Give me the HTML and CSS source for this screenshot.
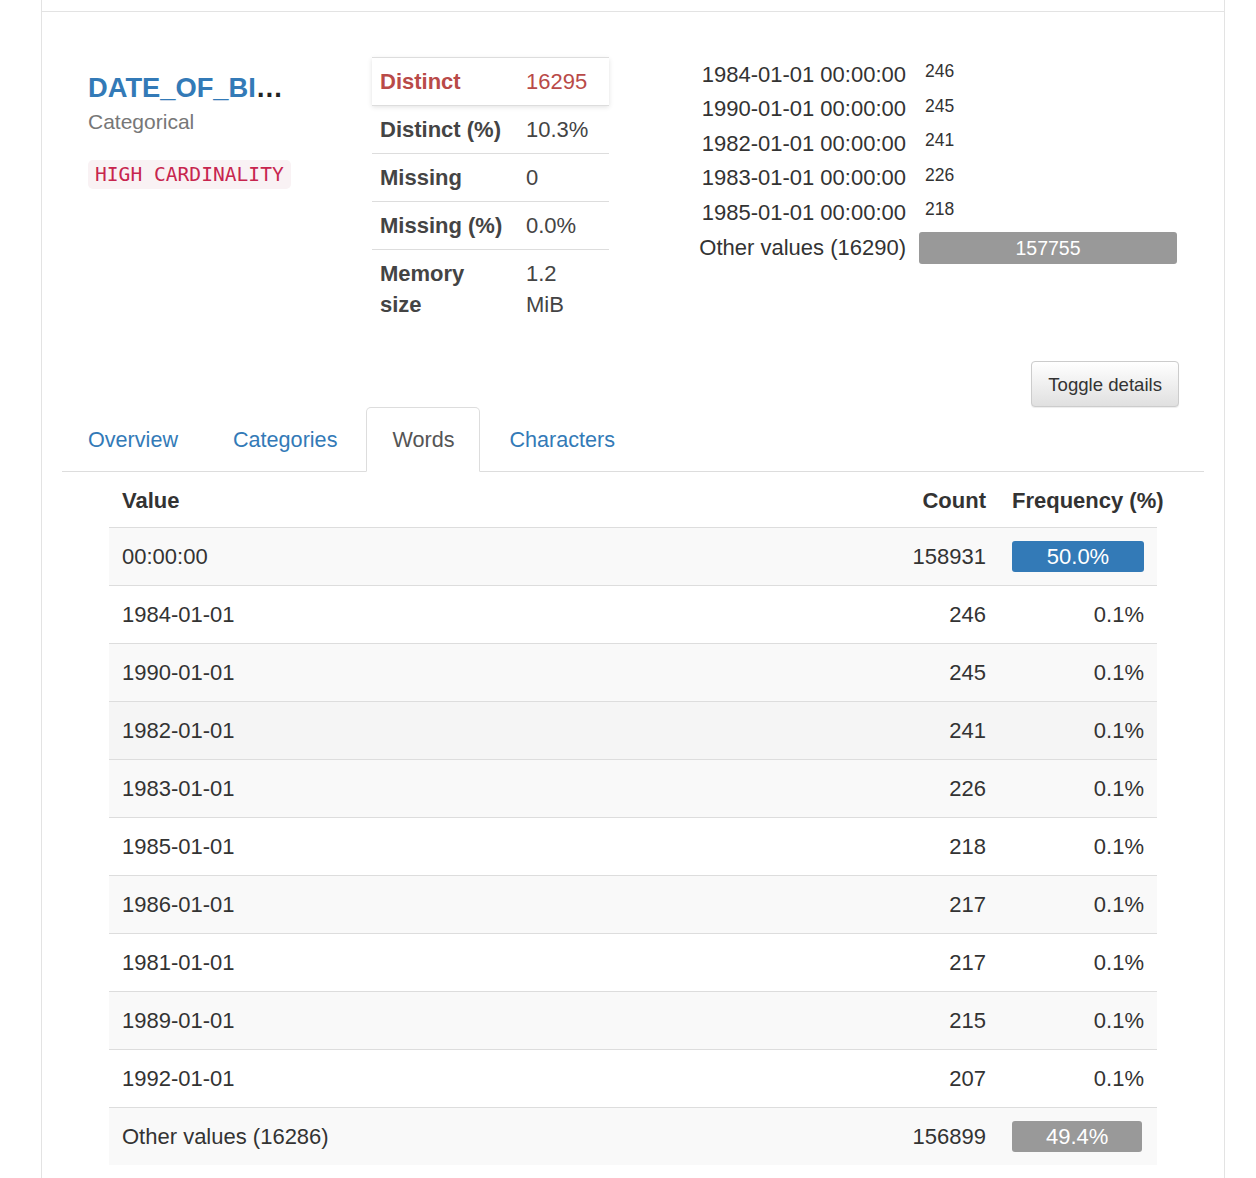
FILE: index.html
```html
<!DOCTYPE html>
<html lang="en">
<head>
<meta charset="utf-8">
<title>DATE_OF_BIRTH</title>
<link rel="stylesheet" href="styles.css">
</head>
<body>
<div class="prev-item"></div>
<div class="variable">
  <div class="top-row">
    <div class="col col-title">
      <p class="var-name"><a class="var-link" href="#">DATE_OF_BI</a>…</p>
      <small class="var-type">Categorical</small>
      <code class="alert-badge">HIGH CARDINALITY</code>
    </div>
    <div class="col col-stats">
      <table class="stats">
        <tr class="alert-row"><th>Distinct</th><td>16295</td></tr>
        <tr><th>Distinct (%)</th><td>10.3%</td></tr>
        <tr><th>Missing</th><td>0</td></tr>
        <tr><th>Missing (%)</th><td>0.0%</td></tr>
        <tr><th>Memory size</th><td>1.2 MiB</td></tr>
      </table>
    </div>
    <div class="col col-freq">
      <table class="mini">
        <colgroup><col class="mini-label-col"><col></colgroup>
        <tr><th>1984-01-01 00:00:00</th><td class="mini-count">246</td></tr>
        <tr><th>1990-01-01 00:00:00</th><td class="mini-count">245</td></tr>
        <tr><th>1982-01-01 00:00:00</th><td class="mini-count">241</td></tr>
        <tr><th>1983-01-01 00:00:00</th><td class="mini-count">226</td></tr>
        <tr><th>1985-01-01 00:00:00</th><td class="mini-count">218</td></tr>
        <tr><th>Other values (16290)</th><td><div class="mini-bar">157755</div></td></tr>
      </table>
    </div>
  </div>

  <div class="btn-row"><button class="toggle-btn" type="button">Toggle details</button></div>

  <ul class="tabs">
    <li><a href="#">Overview</a></li>
    <li><a href="#">Categories</a></li>
    <li class="active"><a href="#">Words</a></li>
    <li><a href="#">Characters</a></li>
  </ul>

  <div class="tab-content">
    <table class="freq">
      <colgroup><col><col class="count-col"><col class="pct-col"></colgroup>
      <thead>
        <tr><th class="th-value">Value</th><th class="th-count">Count</th><th class="th-pct">Frequency (%)</th></tr>
      </thead>
      <tbody>
        <tr><td>00:00:00</td><td class="num">158931</td><td><div class="bar bar-blue" style="width:100%">50.0%</div></td></tr>
        <tr><td>1984-01-01</td><td class="num">246</td><td class="num">0.1%</td></tr>
        <tr><td>1990-01-01</td><td class="num">245</td><td class="num">0.1%</td></tr>
        <tr class="hovered"><td>1982-01-01</td><td class="num">241</td><td class="num">0.1%</td></tr>
        <tr><td>1983-01-01</td><td class="num">226</td><td class="num">0.1%</td></tr>
        <tr><td>1985-01-01</td><td class="num">218</td><td class="num">0.1%</td></tr>
        <tr><td>1986-01-01</td><td class="num">217</td><td class="num">0.1%</td></tr>
        <tr><td>1981-01-01</td><td class="num">217</td><td class="num">0.1%</td></tr>
        <tr><td>1989-01-01</td><td class="num">215</td><td class="num">0.1%</td></tr>
        <tr><td>1992-01-01</td><td class="num">207</td><td class="num">0.1%</td></tr>
        <tr><td>Other values (16286)</td><td class="num">156899</td><td><div class="bar bar-gray" style="width:98.7%">49.4%</div></td></tr>
      </tbody>
    </table>
  </div>
</div>
</body>
</html>
```

FILE: styles.css
```css
* { box-sizing: border-box; }

html, body {
  margin: 0;
  padding: 0;
  background: #fff;
}

body {
  font-family: "Liberation Sans", Arial, Helvetica, sans-serif;
  font-size: 22px;
  line-height: 31px;
  color: #333;
}

.prev-item {
  margin-left: 41px;
  width: 1184px;
  height: 11px;
  border-left: 1px solid #e3e3e3;
  border-right: 1px solid #e3e3e3;
}

.variable {
  margin-left: 41px;
  width: 1184px;
  min-height: 1180px;
  border: 1px solid #e3e3e3;
  padding: 45px 20px 0 20px;
}

/* ---------- top row ---------- */
.top-row {
  display: grid;
  grid-template-columns: 3fr 3fr 6fr;
}

.col {
  padding: 0 25px;
}

.col-title {
  padding-left: 26px;
}

.var-name {
  margin: 15px 0 0 0;
  font-size: 27.3px;
  line-height: 32px;
  font-weight: 700;
  color: #222;
  white-space: nowrap;
}

.var-link {
  color: #337ab7;
  text-decoration: none;
}

.var-type {
  display: block;
  margin-top: 3px;
  font-size: 21px;
  line-height: 30px;
  color: #777;
}

.alert-badge {
  display: inline-block;
  margin-top: 23px;
  padding: 0 7px;
  font-family: "DejaVu Sans Mono", "Liberation Mono", monospace;
  font-size: 19.6px;
  line-height: 29px;
  color: #c7254e;
  background: #f9f2f4;
  border-radius: 5px;
}

/* stats table */
.stats {
  width: 237px;
  border-collapse: collapse;
}

.stats th,
.stats td {
  padding: 8px 8px;
  line-height: 31px;
  vertical-align: top;
  text-align: left;
  border-top: 1px solid #ddd;
}

.stats th {
  width: 146px;
  padding-right: 12px;
  font-weight: 700;
  color: #444;
}

.stats td {
  padding-right: 16px;
  color: #444;
}

.stats .alert-row {
  box-shadow: 0 1px 5px rgba(0, 0, 0, 0.12);
}

.stats .alert-row th,
.stats .alert-row td {
  color: #b94a48;
}

/* mini freq table */
.mini {
  width: 100%;
  table-layout: fixed;
  border-collapse: collapse;
}

.mini-label-col {
  width: 253px;
}

.mini th {
  padding: 1.6px 6px 1.6px 0;
  line-height: 31.4px;
  font-weight: 400;
  text-align: right;
  white-space: nowrap;
  color: #333;
}

.mini td {
  padding: 1.6px 2px 1.6px 7px;
  line-height: 31.4px;
}

.mini td.mini-count {
  vertical-align: top;
  padding-top: 3px;
  padding-left: 13px;
  font-size: 17.5px;
  line-height: 22px;
  color: #333;
}

.mini-bar {
  height: 32px;
  line-height: 32px;
  background: #999;
  color: #fff;
  font-size: 19.5px;
  text-align: center;
  border-radius: 3px;
}

/* ---------- toggle button ---------- */
.btn-row {
  margin-top: 33px;
  padding-right: 25px;
  text-align: right;
}

.toggle-btn {
  display: inline-block;
  margin: 0;
  padding: 9px 16px 8px;
  font-family: "Liberation Sans", Arial, Helvetica, sans-serif;
  font-size: 18.6px;
  line-height: 27px;
  color: #333;
  background-image: linear-gradient(to bottom, #ffffff 0%, #e0e0e0 100%);
  border: 1px solid #ccc;
  border-radius: 4px;
  box-shadow: inset 0 1px 0 rgba(255, 255, 255, 0.15), 0 1px 1px rgba(0, 0, 0, 0.075);
  vertical-align: top;
}

/* ---------- tabs ---------- */
.tabs {
  display: flex;
  margin: 0;
  padding: 0;
  list-style: none;
  border-bottom: 1px solid #ddd;
}

.tabs li {
  margin-bottom: -1px;
  margin-right: 3px;
}

.tabs a {
  display: block;
  padding: 16px 25px;
  font-size: 21.6px;
  line-height: 31px;
  color: #337ab7;
  text-decoration: none;
  border: 1px solid transparent;
  border-radius: 5px 5px 0 0;
}

.tabs .active a {
  color: #555;
  background: #fff;
  border-color: #ddd #ddd transparent #ddd;
}

/* ---------- frequency table ---------- */
.tab-content {
  padding: 0 47px;
}

.freq {
  width: 100%;
  table-layout: fixed;
  border-collapse: collapse;
}

.count-col { width: 160px; }
.pct-col { width: 158px; }

.freq th {
  padding: 13px 13px 11px;
  line-height: 31px;
  font-weight: 700;
  border-bottom: 1px solid #ddd;
  white-space: nowrap;
}

.th-value { text-align: left; }
.th-count { text-align: right; }
.th-pct { text-align: left; }

.freq td {
  padding: 13px 13px;
  line-height: 31px;
  border-bottom: 1px solid #ddd;
  white-space: nowrap;
}

.freq tbody tr:last-child td {
  border-bottom: none;
}

.freq tbody tr:nth-child(odd) {
  background: #f9f9f9;
}

.freq tbody tr.hovered {
  background: #f5f5f5;
}

.freq td.num {
  text-align: right;
}

.bar {
  height: 31px;
  line-height: 31px;
  color: #fff;
  text-align: center;
  border-radius: 3px;
}

.bar-blue { background: #337ab7; }
.bar-gray { background: #999; }
```
